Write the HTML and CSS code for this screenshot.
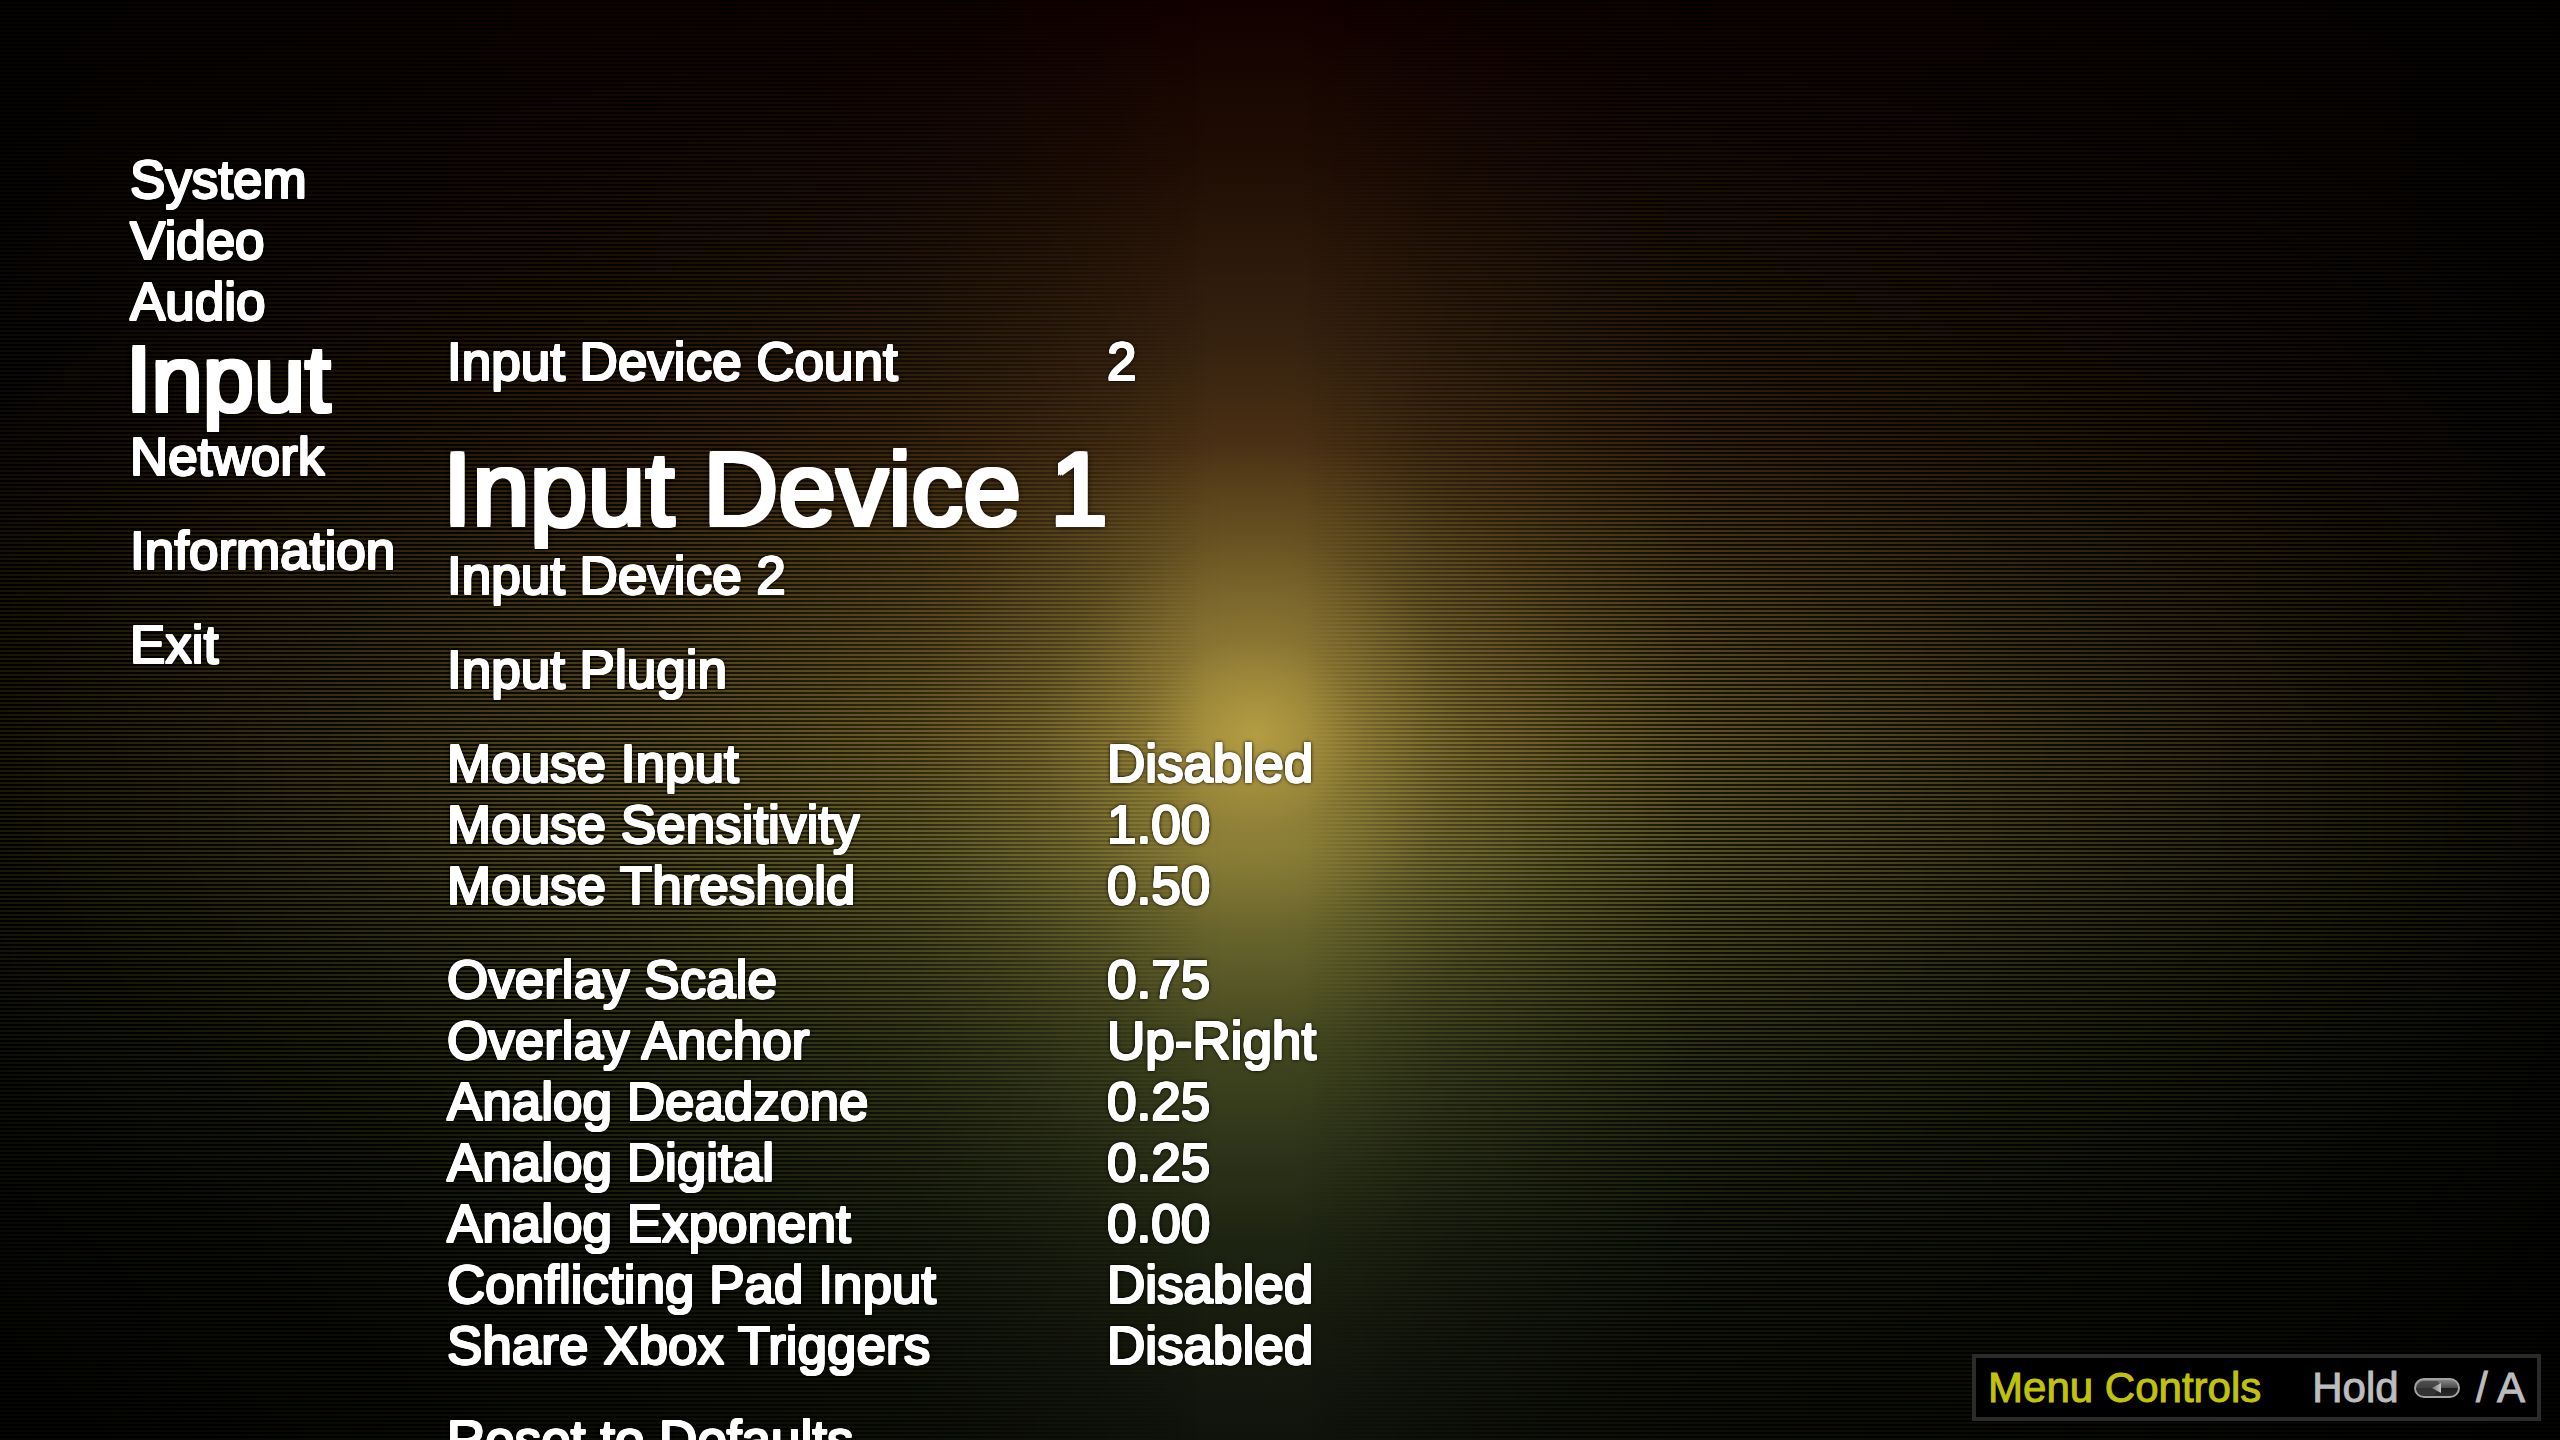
FILE: index.html
```html
<!DOCTYPE html>
<html lang="en">
<head>
<meta charset="utf-8">
<title>Input settings</title>
<link rel="stylesheet" href="styles.css">
</head>
<body>
<div class="screen">
  <main class="menu">
    <nav class="tabs" aria-label="Main menu">
      <a class="item" href="#system">System</a>
      <a class="item" href="#video">Video</a>
      <a class="item" href="#audio">Audio</a>
      <a class="item tab-current" href="#input" aria-current="page">Input</a>
      <a class="item" href="#network">Network</a>
      <a class="item spaced" href="#information">Information</a>
      <a class="item spaced" href="#exit">Exit</a>
    </nav>
    <section class="settings" aria-label="Input">
      <div class="group">
        <button class="row"><span>Input Device Count</span><span>2</span></button>
      </div>
      <div class="group">
        <button class="row selected"><span>Input Device 1</span></button>
        <button class="row"><span>Input Device 2</span></button>
      </div>
      <div class="group">
        <button class="row"><span>Input Plugin</span></button>
      </div>
      <div class="group">
        <button class="row"><span>Mouse Input</span><span>Disabled</span></button>
        <button class="row"><span>Mouse Sensitivity</span><span>1.00</span></button>
        <button class="row"><span>Mouse Threshold</span><span>0.50</span></button>
      </div>
      <div class="group">
        <button class="row"><span>Overlay Scale</span><span>0.75</span></button>
        <button class="row"><span>Overlay Anchor</span><span>Up-Right</span></button>
        <button class="row"><span>Analog Deadzone</span><span>0.25</span></button>
        <button class="row"><span>Analog Digital</span><span>0.25</span></button>
        <button class="row"><span>Analog Exponent</span><span>0.00</span></button>
        <button class="row"><span>Conflicting Pad Input</span><span>Disabled</span></button>
        <button class="row"><span>Share Xbox Triggers</span><span>Disabled</span></button>
      </div>
      <div class="group">
        <button class="row"><span>Reset to Defaults</span></button>
      </div>
    </section>
  </main>
  <footer class="hint">
    <span class="hint-title">Menu Controls</span>
    <span class="hint-keys">Hold
      <svg class="back-key" viewBox="0 0 46 20" role="img" aria-label="Back">
        <defs>
          <linearGradient id="shell" x1="0" y1="0" x2="0" y2="1">
            <stop offset="0" stop-color="#8c8c8c"/>
            <stop offset="0.5" stop-color="#4a4a4a"/>
            <stop offset="0.5" stop-color="#1c1c1c"/>
            <stop offset="1" stop-color="#2c2c2c"/>
          </linearGradient>
          <linearGradient id="arrow" x1="0" y1="0" x2="1" y2="0">
            <stop offset="0" stop-color="#777"/>
            <stop offset="1" stop-color="#c4c4c4"/>
          </linearGradient>
        </defs>
        <rect x="1" y="1" width="44" height="18" rx="9" fill="url(#shell)" stroke="#a2a2a2" stroke-width="2"/>
        <path d="M3 11C3 5 6 3 10 3H24L27 10L20 17H10C6 17 3 15 3 11Z" fill="#3a3a3a" opacity="0.7"/>
        <path d="M18 10L27 5V15Z" fill="url(#arrow)"/>
      </svg>
      / A</span>
  </footer>
</div>
</body>
</html>
```

FILE: styles.css
```css
* {
  box-sizing: border-box;
}

body {
  margin: 0;
  background: #000;
}

.screen {
  display: flex;
  flex-direction: column;
  height: 100vh;
  overflow: hidden;
  position: relative;
  isolation: isolate;
  color: #fff;
  font-family: "Liberation Sans", Arial, sans-serif;
  font-size: 53px;
  line-height: 61px;
  background:
    radial-gradient(330px 300px at 49% 51%, rgba(186, 164, 70, 0.85) 0%, rgba(160, 140, 60, 0.42) 33%, rgba(130, 115, 48, 0.14) 66%, transparent 100%),
    linear-gradient(to right, rgba(0, 0, 0, 0.8) 0%, rgba(0, 0, 0, 0.62) 10%, rgba(0, 0, 0, 0.36) 24%, rgba(0, 0, 0, 0.2) 36%, transparent 48%, transparent 50%, rgba(0, 0, 0, 0.28) 66%, rgba(0, 0, 0, 0.62) 86%, rgba(0, 0, 0, 0.88) 100%),
    linear-gradient(to bottom, #120000 0%, #1f0d04 11%, #36220f 24%, #4a3014 31%, #614a1e 37%, #75602a 44%, #8a7632 51%, #7f7634 59%, #5e5d29 66%, #444820 72%, #30361a 79%, #1e2412 86%, #161a0e 93%, #10130c 100%);
}

/* Scanlines, fading out towards the bright column */
.screen::before {
  content: "";
  position: absolute;
  inset: 0;
  z-index: -1;
  background: repeating-linear-gradient(to bottom, #000 0 2px, rgba(60, 10, 0, 0.1) 2px 4px, #000 4px 6px, rgba(0, 40, 0, 0.1) 6px 8px);
  mask-image: linear-gradient(to right, rgba(0, 0, 0, 0.9) 0%, rgba(0, 0, 0, 0.8) 25%, rgba(0, 0, 0, 0.55) 36%, rgba(0, 0, 0, 0.25) 43%, transparent 47%, transparent 51%, rgba(0, 0, 0, 0.35) 56%, rgba(0, 0, 0, 0.75) 66%, rgba(0, 0, 0, 0.9) 100%);
}

.menu {
  display: flex;
  flex: 1;
  min-height: 0;
  padding: 149px 130px 0;
}

.tabs {
  display: flex;
  flex-direction: column;
  flex: none;
  width: 317px;
}

.item {
  color: inherit;
  text-decoration: none;
  white-space: nowrap;
}

/* White offsets thicken the letters; the last shadow is their dark rim */
.item,
.row {
  text-shadow:
    1px 0 #fff, -1px 0 #fff, 0 1px #fff, 0 -1px #fff,
    1px 1px #fff, -1px -1px #fff, 1px -1px #fff, -1px 1px #fff,
    0 0 4px #000, 0 0 4px #000;
}

.item.tab-current,
.row.selected {
  text-shadow:
    2px 0 #fff, -2px 0 #fff, 0 2px #fff, 0 -2px #fff,
    2px 2px #fff, -2px -2px #fff, 2px -2px #fff, -2px 2px #fff,
    0 0 6px #000, 0 0 6px #000;
}

.tab-current {
  margin-left: -4px;
  font-size: 92px;
  line-height: 94px;
}

.spaced {
  margin-top: 33px;
}

.settings {
  display: flex;
  flex-direction: column;
  flex: 1;
  gap: 33px;
  padding-top: 182px;
}

.row {
  display: grid;
  grid-template-columns: 660px auto;
  justify-content: start;
  width: 100%;
  height: 61px;
  margin: 0;
  border: 0;
  padding: 0;
  background: none;
  color: inherit;
  font-family: inherit;
  font-size: inherit;
  line-height: inherit;
  text-align: left;
  white-space: nowrap;
}

.selected {
  height: 120px;
  margin-left: -4px;
  font-size: 104px;
  line-height: 128px;
}

.hint {
  position: absolute;
  right: 19px;
  bottom: 19px;
  display: flex;
  align-items: center;
  gap: 51px;
  height: 67px;
  border: 4px solid #2b2b2b;
  padding: 0 12px;
  background: #000;
  color: #bcbcbc;
  font-size: 42px;
  line-height: 59px;
  -webkit-text-stroke: 1px;
}

.hint-title {
  color: #c0c20c;
}

.back-key {
  width: 46px;
  height: 20px;
  margin: 0 4px;
  vertical-align: 4px;
}
```
